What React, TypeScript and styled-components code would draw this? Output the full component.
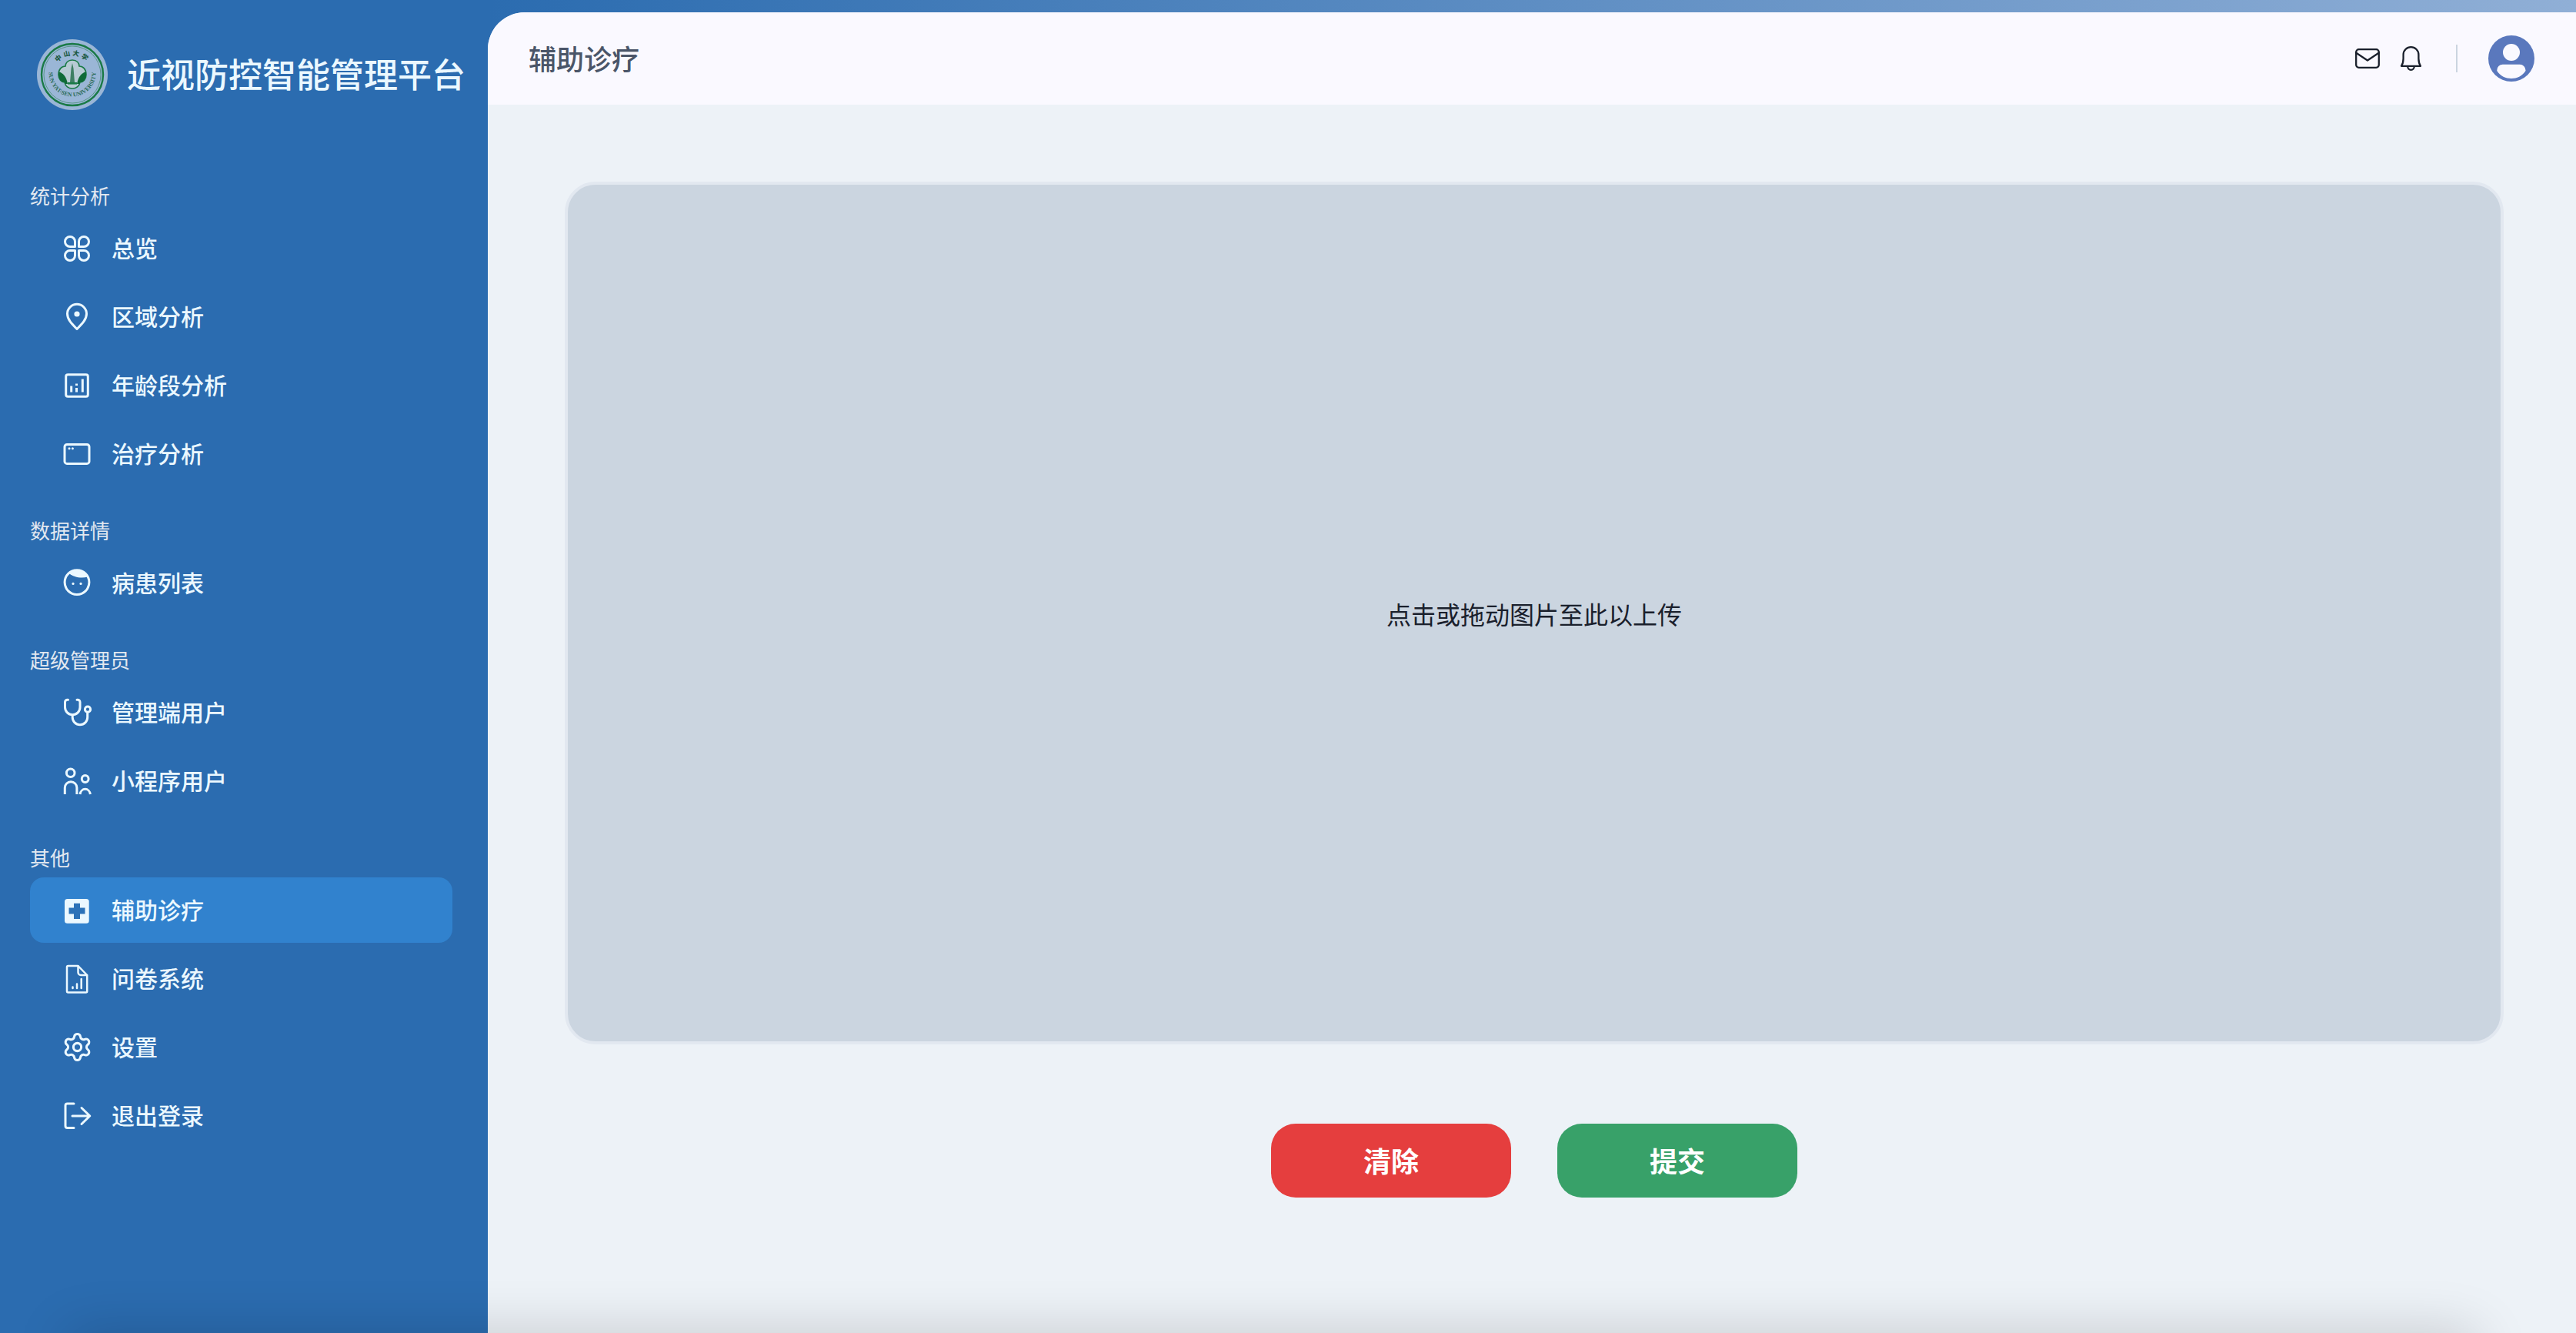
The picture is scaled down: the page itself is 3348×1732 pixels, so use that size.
import React from "react";
import styled, { createGlobalStyle } from "styled-components";
import { Settings } from "lucide-react";

const GlobalStyle = createGlobalStyle`
  html, body { margin: 0; padding: 0; }
  body { font-family: "Noto Sans CJK SC", "Noto Sans", sans-serif; }
  * { box-sizing: border-box; }
`;

const Shell = styled.div`
  position: relative;
  display: flex;
  width: 3348px;
  height: 1732px;
  overflow: hidden;
`;

const BottomShade = styled.div`
  position: absolute;
  left: 90px;
  right: 130px;
  top: 1732px;
  height: 60px;
  box-shadow: 0 0 70px rgba(0, 0, 0, 0.18);
  pointer-events: none;
`;

const Sidebar = styled.aside`
  flex: 0 0 634px;
  width: 634px;
  min-width: 0;
  display: flex;
  flex-direction: column;
  padding: 0 46px 0 39px;
  background: #2b6cb0;
  color: #ebf8ff;
`;

const Brand = styled.div`
  display: flex;
  align-items: center;
  gap: 25px;
  height: 194px;
  margin-bottom: 44px;
  padding-left: 9px;
`;

const LogoMark = styled.svg`
  flex: 0 0 92px;
  display: block;
`;

const BrandName = styled.h1`
  margin: 0 0 4px;
  font-size: 44px;
  line-height: 60px;
  font-weight: 500;
  white-space: nowrap;
  color: #ebf8ff;
`;

const Nav = styled.nav`
  display: flex;
  flex-direction: column;
  gap: 41px;
`;

const Section = styled.section`
  display: flex;
  flex-direction: column;
`;

const SectionLabel = styled.div`
  height: 36px;
  margin-bottom: 6px;
  font-size: 26px;
  line-height: 32px;
  font-weight: 400;
  color: #e2e8f0;
`;

const ItemList = styled.div`
  display: flex;
  flex-direction: column;
  gap: 4px;
`;

const Item = styled.a<{ $active?: boolean }>`
  display: flex;
  align-items: center;
  gap: 27px;
  height: 85px;
  padding-left: 42px;
  border-radius: 18px;
  background: ${(p) => (p.$active ? "#3182ce" : "transparent")};
  font-size: 30px;
  line-height: 40px;
  font-weight: 500;
  color: #ebf8ff;
`;

const ItemName = styled.span`
  margin-bottom: 4px;
  margin-left: -1px;
`;

const IconBox = styled.span`
  flex: 0 0 38px;
  width: 38px;
  min-width: 0;
  height: 38px;
  display: flex;
  align-items: center;
  justify-content: center;
  svg { flex-shrink: 0; overflow: visible; display: block; }
`;

const Main = styled.div`
  flex: 1;
  min-width: 0;
  display: flex;
  flex-direction: column;
  padding-top: 16px;
  background: linear-gradient(90deg, #2b6cb0, #90afd6);
`;

const Panel = styled.div`
  flex: 1;
  display: flex;
  flex-direction: column;
  overflow: hidden;
  background: #edf2f7;
  border-top-left-radius: 48px;
`;

const Header = styled.header`
  flex: 0 0 120px;
  display: flex;
  align-items: center;
  justify-content: space-between;
  padding: 0 54px 0 53px;
  background: #faf9ff;
`;

const PageTitle = styled.h2`
  margin: 0 0 3px;
  font-size: 36px;
  line-height: 48px;
  font-weight: 500;
  color: #4a5568;
`;

const HeaderTools = styled.div`
  display: flex;
  align-items: center;
`;

const ToolIcon = styled.svg<{ $gap: number }>`
  display: block;
  margin-right: ${(p) => p.$gap}px;
  overflow: visible;
`;

const Divider = styled.div`
  width: 2px;
  height: 36px;
  margin-right: 40px;
  background: #cbd5e0;
`;

const Content = styled.main`
  flex: 1;
  display: flex;
  flex-direction: column;
  padding: 100px 94px 0 100px;
`;

const UploadZone = styled.div`
  flex: 0 0 1121px;
  display: flex;
  align-items: center;
  justify-content: center;
  border: 4px solid #e2e8f0;
  border-radius: 40px;
  background: #cbd5e0;
  font-size: 32px;
  line-height: 44px;
  color: #1a202c;
`;

const Actions = styled.div`
  display: flex;
  justify-content: center;
  gap: 60px;
  margin-top: 103px;
`;

const ActionButton = styled.button<{ $bg: string }>`
  width: 312px;
  height: 96px;
  padding: 0 0 3px;
  border: 0;
  border-radius: 32px;
  background: ${(p) => p.$bg};
  color: #fff;
  font-family: inherit;
  font-size: 36px;
  font-weight: 700;
`;

const Line: React.FC<React.SVGProps<SVGSVGElement>> = ({ children, ...rest }) => (
  <svg width="38" height="38" viewBox="0 0 38 38" fill="none" stroke="currentColor" strokeWidth="3" strokeLinecap="round" strokeLinejoin="round" {...rest}>
    {children}
  </svg>
);

const OverviewIcon = () => (
  <Line>
    <path d="M16.5 16.500H10a6.5 6.5 0 1 1 6.5-6.5Z" />
    <path d="M21.5 16.500V10a6.5 6.5 0 1 1 6.5 6.5Z" />
    <path d="M16.5 21.500V28a6.5 6.5 0 1 1-6.5-6.5Z" />
    <path d="M21.5 21.500H28a6.5 6.5 0 1 1-6.5 6.5Z" />
  </Line>
);
const PinIcon = () => (
  <Line>
    <path d="M19 34.500C13 28.500 6.500 22.500 6.500 14.800a12.500 12.500 0 0 1 25 0C31.500 22.500 25 28.500 19 34.500Z" />
    <circle cx="19" cy="15" r="3.6" fill="currentColor" stroke="none" />
  </Line>
);
const ChartIcon = () => (
  <Line strokeLinecap="butt">
    <rect x="4.7" y="4.7" width="28.6" height="28.6" rx="2.5" />
    <path d="M11.700 19.500V27.500M18.500 16.500V19M18.500 22V27.500M26.300 10.500V27.500" />
  </Line>
);
const WindowIcon = () => (
  <Line>
    <rect x="3" y="6.4" width="32" height="25" rx="3" />
    <circle cx="9" cy="11.7" r="1.5" fill="currentColor" stroke="none" />
    <circle cx="13.4" cy="11.7" r="1.5" fill="currentColor" stroke="none" />
  </Line>
);
const FaceIcon = () => (
  <Line>
    <circle cx="19" cy="17.6" r="15.9" />
    <path d="M9 6C14 11 25 13 33 10.500A15.900 15.900 0 0 0 19 1.800 15.900 15.900 0 0 0 9 6Z" fill="currentColor" stroke="none" />
    <circle cx="14" cy="19.4" r="1.6" fill="currentColor" stroke="none" />
    <circle cx="24" cy="19.4" r="1.6" fill="currentColor" stroke="none" />
  </Line>
);
const StethoscopeIcon = () => (
  <Line>
    <path d="M7.500 2.200H6.500A3 3 0 0 0 3.500 5.200V12A9.700 9.700 0 0 0 23 12V5.200A3 3 0 0 0 20 2.200H19" />
    <path d="M13.200 22V25A9.700 9.700 0 0 0 32.700 25V19" />
    <circle cx="33" cy="14.7" r="3.6" />
  </Line>
);
const PeopleIcon = () => (
  <Line strokeLinecap="butt">
    <circle cx="10.7" cy="8.3" r="5.3" />
    <path d="M3.300 36V27.500a7.800 7.800 0 0 1 15.600 0V36" />
    <circle cx="29.7" cy="16" r="4.4" />
    <path d="M23 36A6.800 8 0 0 1 36.400 36" />
  </Line>
);
const CrossIcon = () => (
  <svg width="38" height="38" viewBox="0 0 38 38">
    <rect x="3" y="4" width="31.7" height="31.7" rx="3.5" fill="currentColor" />
    <path d="M15 9.700H23V15.500H29.500V23.500H23V30H15V23.500H8.500V15.500H15Z" fill="#2c72b8" />
  </svg>
);
const FileIcon = () => (
  <Line strokeWidth="2.5">
    <path d="M6 3.500A1.500 1.500 0 0 1 7.500 2H20.500L32.200 14V35A1.500 1.500 0 0 1 30.700 36.500H7.500A1.500 1.500 0 0 1 6 35Z" />
    <path d="M20.500 2.200V10.500A3.500 3.500 0 0 0 24 14H32" />
    <path d="M13.500 29.500V31M19 25.500V31M24.700 19V31" />
  </Line>
);
const GearIcon = () => <Settings size={41} strokeWidth={1.8} />;
const ExitIcon = () => (
  <Line>
    <path d="M15 3H6.500A2.500 2.500 0 0 0 4 5.500V32A2.500 2.500 0 0 0 6.500 34.500H15" />
    <path d="M13 19H35.500M25 8.500 35.800 19 25 29.500" />
  </Line>
);

const foil =
  "M46 27C52 27 55 31 55 35C60 35 64 39 64 46C64 52 60 56 56 56C55 61 51 64 46 64C41 64 37 61 36 56C32 56 28 52 28 46C28 39 32 35 37 35C37 31 40 27 46 27Z";

const Logo = () => (
  <LogoMark width="92" height="92" viewBox="0 0 92 92">
    <defs>
      <path id="seal-bottom" d="M15.500 44A30.500 30.500 0 0 0 76.500 44" />
      <path id="seal-top" d="M21 46A25 25 0 0 1 71 46" />
      <clipPath id="seal-foil">
        <path d={foil} />
      </clipPath>
    </defs>
    <circle cx="46" cy="46" r="46" fill="#9ab6d6" />
    <circle cx="46" cy="46" r="40" fill="none" stroke="#1a7a46" strokeWidth="2.4" />
    <circle cx="46" cy="46" r="37" fill="none" stroke="#3f8a68" strokeWidth="0.7" />
    <text fontFamily="'Liberation Serif', serif" fontSize="7.6" fontWeight="700" fill="#2a6a55">
      <textPath href="#seal-bottom" startOffset="50%" textAnchor="middle">SUN YAT-SEN UNIVERSITY</textPath>
    </text>
    <text fontFamily="'Noto Sans CJK SC', sans-serif" fontSize="8.500" fontWeight="900" fill="#1e5a44" letterSpacing="2.5">
      <textPath href="#seal-top" startOffset="50%" textAnchor="middle">中山大学</textPath>
    </text>
    <path d={foil} fill="#b7cbd4" stroke="#1a7a46" strokeWidth="1.6" />
    <g clipPath="url(#seal-foil)">
      <path d="M28 42C34 44 38 48 40 58L28 58ZM64 42C58 44 54 48 52 58L64 58Z" fill="#0f6a38" />
    </g>
    <path d="M44.500 38L46 31L47.500 38L49 56H43Z" fill="#3e7f63" />
    <rect x="40" y="56" width="12" height="2.6" fill="#1a7a46" />
  </LogoMark>
);

const sections = [
  {
    label: "统计分析",
    items: [
      { name: "总览", icon: <OverviewIcon /> },
      { name: "区域分析", icon: <PinIcon /> },
      { name: "年龄段分析", icon: <ChartIcon /> },
      { name: "治疗分析", icon: <WindowIcon /> },
    ],
  },
  { label: "数据详情", items: [{ name: "病患列表", icon: <FaceIcon /> }] },
  {
    label: "超级管理员",
    items: [
      { name: "管理端用户", icon: <StethoscopeIcon /> },
      { name: "小程序用户", icon: <PeopleIcon /> },
    ],
  },
  {
    label: "其他",
    items: [
      { name: "辅助诊疗", icon: <CrossIcon />, active: true },
      { name: "问卷系统", icon: <FileIcon /> },
      { name: "设置", icon: <GearIcon /> },
      { name: "退出登录", icon: <ExitIcon /> },
    ],
  },
];

export default function App() {
  return (
    <Shell>
      <GlobalStyle />
      <Sidebar>
        <Brand>
          <Logo />
          <BrandName>近视防控智能管理平台</BrandName>
        </Brand>
        <Nav>
          {sections.map((s) => (
            <Section key={s.label}>
              <SectionLabel>{s.label}</SectionLabel>
              <ItemList>
                {s.items.map((it) => (
                  <Item key={it.name} $active={"active" in it && it.active}>
                    <IconBox>{it.icon}</IconBox>
                    <ItemName>{it.name}</ItemName>
                  </Item>
                ))}
              </ItemList>
            </Section>
          ))}
        </Nav>
      </Sidebar>
      <Main>
        <Panel>
          <Header>
            <PageTitle>辅助诊疗</PageTitle>
            <HeaderTools>
              <ToolIcon $gap={27} width="32" height="26" viewBox="0 0 32 26" fill="none" stroke="#1a202c" strokeWidth="2.3" strokeLinecap="round" strokeLinejoin="round">
                <rect x="1.2" y="1.2" width="29.6" height="23.6" rx="3.5" />
                <path d="M1 5.500 16 15.500 31 5.500" />
              </ToolIcon>
              <ToolIcon $gap={45} width="27" height="32" viewBox="0 0 27 32" fill="none" stroke="#1a202c" strokeWidth="2.3" strokeLinecap="round" strokeLinejoin="round">
                <path d="M1 25.800C3 23 3.600 20 3.600 16V11A9.900 9.900 0 0 1 23.400 11V16C23.400 20 24 23 26 25.800Z" />
                <path d="M9.200 26.200A4.300 4.600 0 0 0 17.800 26.200" />
              </ToolIcon>
              <Divider />
              <svg width="60" height="60" viewBox="0 0 60 60">
                <circle cx="30" cy="30" r="30" fill="#5a78bd" />
                <circle cx="30" cy="22" r="11" fill="#faf9ff" />
                <path d="M19 37.700H41A7.500 7.500 0 0 1 48.500 45.200V46C44 53 37 56 30 56C23 56 15.500 53 11.300 46V45.200A7.500 7.500 0 0 1 19 37.700Z" fill="#faf9ff" />
              </svg>
            </HeaderTools>
          </Header>
          <Content>
            <UploadZone>点击或拖动图片至此以上传</UploadZone>
            <Actions>
              <ActionButton $bg="#e53e3e">清除</ActionButton>
              <ActionButton $bg="#38a169">提交</ActionButton>
            </Actions>
          </Content>
        </Panel>
      </Main>
      <BottomShade />
    </Shell>
  );
}
